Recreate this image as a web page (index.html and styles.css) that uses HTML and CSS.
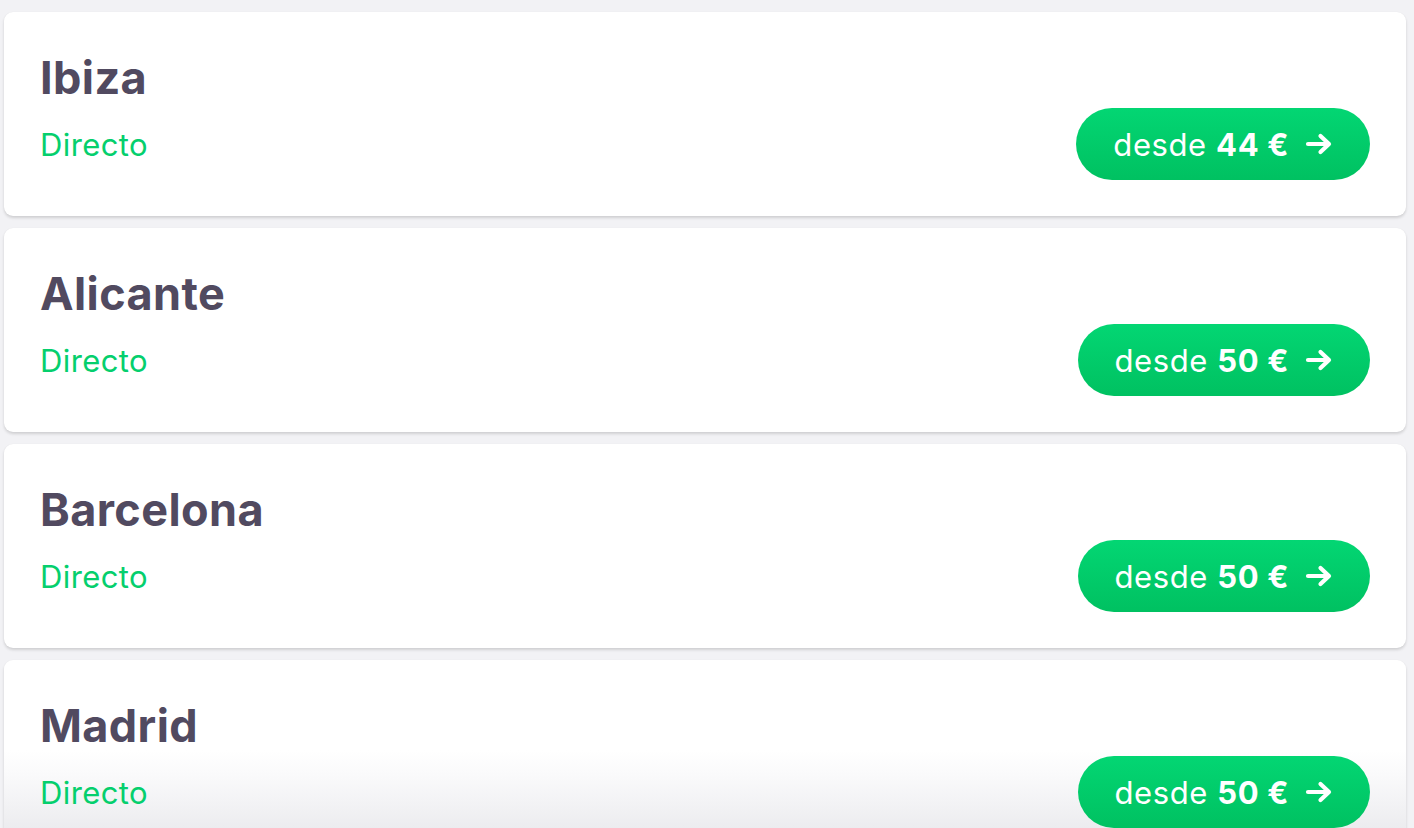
FILE: index.html
```html
<!DOCTYPE html>
<html lang="es">
<head>
<meta charset="utf-8">
<title>Destinos</title>
<link rel="stylesheet" href="styles.css">
</head>
<body>
<main class="list">
  <article class="card">
    <h2 class="city">Ibiza</h2>
    <div class="row">
      <span class="type">Directo</span>
      <a class="price" href="#">desde <b>44 €</b>
        <svg class="arrow" viewBox="0 0 28 22" width="28" height="22"><path d="M3 11H24M15.5 3L24 11L15.5 19" fill="none" stroke="#fff" stroke-width="4.2" stroke-linecap="round" stroke-linejoin="round"/></svg>
      </a>
    </div>
  </article>
  <article class="card">
    <h2 class="city">Alicante</h2>
    <div class="row">
      <span class="type">Directo</span>
      <a class="price" href="#">desde <b>50 €</b>
        <svg class="arrow" viewBox="0 0 28 22" width="28" height="22"><path d="M3 11H24M15.5 3L24 11L15.5 19" fill="none" stroke="#fff" stroke-width="4.2" stroke-linecap="round" stroke-linejoin="round"/></svg>
      </a>
    </div>
  </article>
  <article class="card">
    <h2 class="city">Barcelona</h2>
    <div class="row">
      <span class="type">Directo</span>
      <a class="price" href="#">desde <b>50 €</b>
        <svg class="arrow" viewBox="0 0 28 22" width="28" height="22"><path d="M3 11H24M15.5 3L24 11L15.5 19" fill="none" stroke="#fff" stroke-width="4.2" stroke-linecap="round" stroke-linejoin="round"/></svg>
      </a>
    </div>
  </article>
  <article class="card card-faded">
    <h2 class="city">Madrid</h2>
    <div class="row">
      <span class="type">Directo</span>
      <a class="price" href="#">desde <b>50 €</b>
        <svg class="arrow" viewBox="0 0 28 22" width="28" height="22"><path d="M3 11H24M15.5 3L24 11L15.5 19" fill="none" stroke="#fff" stroke-width="4.2" stroke-linecap="round" stroke-linejoin="round"/></svg>
      </a>
    </div>
  </article>
</main>
</body>
</html>
```

FILE: styles.css
```css
html, body {
  margin: 0;
  height: 100%;
  overflow: hidden;
}
body {
  background: #f2f2f5;
  font-family: Inter, "Liberation Sans", sans-serif;
}
.list {
  display: flex;
  flex-direction: column;
  gap: 12px;
  padding: 12px 8px 0 4px;
}
.card {
  background: #fff;
  border-radius: 9px;
  box-shadow: 0 2px 3px rgba(0, 0, 0, 0.14), 0 0 1px rgba(0, 0, 0, 0.06);
  padding: 36px;
  height: 204px;
  box-sizing: border-box;
  flex-shrink: 0;
}
.card-faded {
  background: linear-gradient(#fff 90px, #fafafb 115px, #ececef 168px);
}
.city {
  margin: 0;
  font-size: 45px;
  line-height: 60px;
  font-weight: 700;
  color: #514a60;
  letter-spacing: 0.4px;
}
.row {
  display: flex;
  align-items: center;
  justify-content: space-between;
  height: 72px;
}
.type {
  font-size: 31px;
  letter-spacing: 0.4px;
  color: #05cf6d;
}
.price {
  display: flex;
  align-items: center;
  height: 72px;
  padding: 0 37px 0 37px;
  border-radius: 36px;
  background: linear-gradient(#03d673, #00c161);
  color: #fff;
  font-size: 31px;
  letter-spacing: 0.6px;
  text-decoration: none;
  white-space: pre;
}
.price b {
  font-weight: 700;
}
.arrow {
  margin-left: 16px;
}
```
